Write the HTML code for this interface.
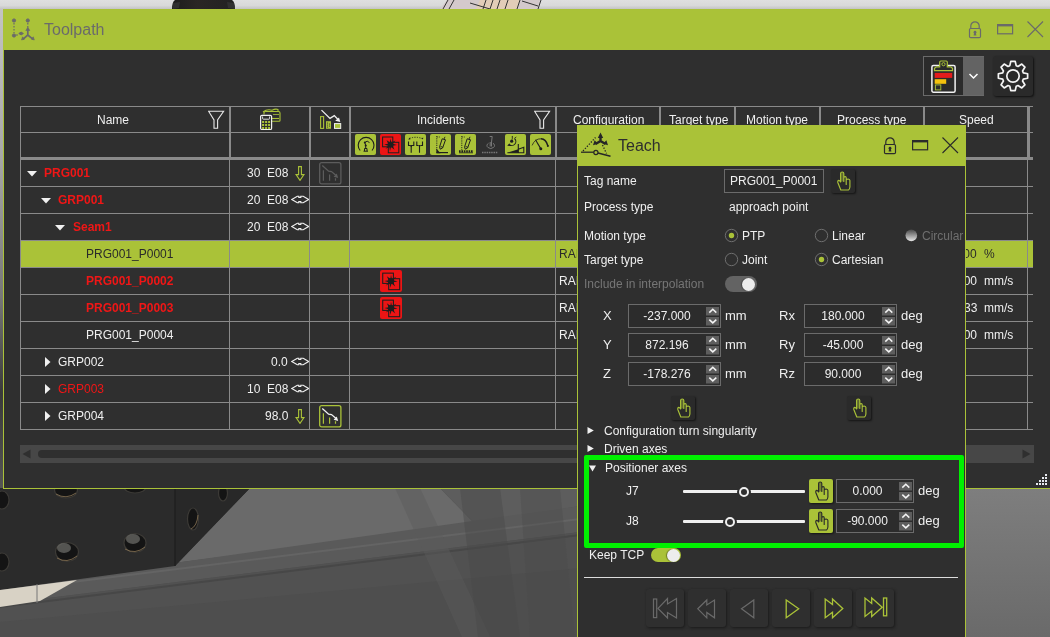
<!DOCTYPE html><html><head><meta charset="utf-8"><style>
*{margin:0;padding:0;box-sizing:border-box}
html,body{width:1050px;height:637px;overflow:hidden;background:#6e6e6e;font-family:"Liberation Sans",sans-serif;font-size:12px;color:#efefef}
.a{position:absolute}
.t{white-space:nowrap;line-height:14px;will-change:transform}
svg{display:block}
</style></head><body><svg class="a" style="left:0;top:0" width="1050" height="637" viewBox="0 0 1050 637"><defs><linearGradient id="topg" x1="0" y1="0" x2="0" y2="1"><stop offset="0" stop-color="#dfdfdf"/><stop offset="0.55" stop-color="#d9d9d9"/><stop offset="1" stop-color="#bdbdbd"/></linearGradient><linearGradient id="rg2" x1="0" y1="0" x2="0" y2="1"><stop offset="0" stop-color="#7e7e7e"/><stop offset="1" stop-color="#6a6a6a"/></linearGradient><linearGradient id="blk" x1="0" y1="0" x2="1" y2="0"><stop offset="0" stop-color="#1c1c1c"/><stop offset="0.4" stop-color="#2a2624"/><stop offset="1" stop-color="#222"/></linearGradient><linearGradient id="lstrip" x1="0" y1="0" x2="0" y2="1"><stop offset="0" stop-color="#c4c4c4"/><stop offset="0.3" stop-color="#a8a8a8"/><stop offset="0.6" stop-color="#777"/><stop offset="0.8" stop-color="#3a3a3a"/><stop offset="1" stop-color="#555"/></linearGradient></defs><rect x="0" y="0" width="1050" height="10" fill="url(#topg)"/><rect x="0" y="9" width="4" height="480" fill="url(#lstrip)"/><path d="M175 0 H232 Q235 2 235 9 H172 Q172 2 175 0Z" fill="url(#blk)"/><path d="M173 3 L180 2 L179 8 L173 9Z M227 2 L234 3 L235 9 L228 8Z" fill="#3a3a3a" opacity="0.6"/><path d="M447 0 H541 L538 9 H440 Z" fill="#d4c9cc"/><path d="M480 0 H520 L517 9 H476 Z" fill="#e2cdb8"/><g stroke="#333" stroke-width="1" fill="none"><path d="M448 0 L443 9 M454 0 L449 9 M470 3 L490 9 M486 0 L483 9 M493 0 L490 9 M500 0 L497 9 M508 0 L505 9 M520 0 L517 9 M522 1 L538 6 M541 0 L538 9"/></g><rect x="0" y="488" width="580" height="149" fill="#4e4e4e"/><path d="M250 488 L440 488 L475 524 L174 563 Z" fill="#6a6a6a"/><path d="M440 488 L580 488 L580 506 L475 524Z" fill="#5d5d5d"/><path d="M174 563 L580 506 L580 532 L0 604 L0 588Z" fill="#5a5a5a"/><path d="M0 604 L580 532 L580 568 L0 622Z" fill="#515151"/><path d="M0 590 L580 518 L580 520 L0 592Z" fill="#646464"/><path d="M0 606 L580 534 L580 536 L0 608Z" fill="#474747"/><path d="M395 488 L420 488 L490 637 L462 637Z" fill="#5a5a5a" opacity="0.45"/><path d="M460 488 L500 488 L520 637 L478 637Z" fill="#4a4a4a" opacity="0.45"/><path d="M520 488 L560 488 L575 637 L530 637Z" fill="#4a4a4a" opacity="0.35"/><path d="M0 488 L250 488 L175 566 L0 590 Z" fill="#2b2b2b"/><path d="M175 488 L250 488 L175 566 Z" fill="#282828"/><path d="M175 488 V566" stroke="#1a1a1a" stroke-width="1"/><g fill="#141414" stroke="#3c3a36" stroke-width="1.2"><ellipse cx="67" cy="552" rx="11.5" ry="9.5"/><ellipse cx="135" cy="543" rx="11" ry="9.5"/><ellipse cx="2" cy="562" rx="7" ry="9"/><ellipse cx="2" cy="500" rx="7" ry="9"/><ellipse cx="66" cy="490" rx="11.5" ry="8"/><ellipse cx="135" cy="487" rx="11" ry="6"/><ellipse cx="193" cy="519" rx="5.5" ry="11"/><ellipse cx="223" cy="493" rx="4.5" ry="8"/></g><g fill="#6a6a66" opacity="0.75"><ellipse cx="64" cy="548" rx="7" ry="5"/><ellipse cx="133" cy="539" rx="7" ry="5"/></g><g fill="none" stroke="#8a7556" stroke-width="1" opacity="0.8"><path d="M57 558 Q67 564 77 556"/><path d="M125 549 Q135 555 145 547"/><path d="M56 494 Q66 500 76 493"/><path d="M191 529 Q197 526 198 515"/></g><path d="M0 590 L77 580 L40 601 L0 607 Z" fill="#d8d2c5"/><path d="M37 584 V603" stroke="#777" stroke-width="1"/><rect x="966" y="488" width="84" height="149" fill="url(#rg2)"/></svg>
<div class="a " style="left:3px;top:9px;width:1060px;height:480px;background:#2f2f2f;border:1px solid #aac238"></div>
<div class="a " style="left:3px;top:9px;width:1060px;height:41px;background:#aac238"></div>
<svg class="a" style="left:10px;top:16px" width="30" height="28" viewBox="0 0 30 28"><g fill="#6a6a6a" stroke="#6a6a6a"><circle cx="4" cy="4.5" r="1.6"/><circle cx="17.8" cy="4.5" r="1.6"/><circle cx="4" cy="19.5" r="1.6"/><path d="M8.8 17.5 l2.3 -1.4 l2.3 1.4 l-2.3 1.4z"/><path d="M4 7v10" stroke-width="1.2" stroke-dasharray="1.5 1.5"/><path d="M17.8 7v6" stroke-width="1.2" stroke-dasharray="1.5 1.5"/><path d="M6 19h2" stroke-width="1.2"/><path d="M17.8 13v6 M17.8 19 l-5 4.3 M17.8 19 l5.3 4.3" stroke-width="1.7"/><path d="M15.8 14.5 l2 -3.2 l2 3.2z M11.5 24 l1 -3.2 l2.2 2.2z M24.3 24 l-1 -3.2 l-2.2 2.2z" stroke-width="0.6"/></g></svg>
<div class="a t " style="left:44px;top:21px;font-size:16px;line-height:18px;color:#6b6b6b">Toolpath</div>
<svg class="a" style="left:968px;top:21px" width="14" height="18" viewBox="0 0 14 18"><path d="M2.8 7.5V5a4.2 4.2 0 0 1 8.4 0V7.5" fill="none" stroke="#6a6a6a" stroke-width="1.2"/><rect x="1.5" y="7.5" width="11" height="9.2" rx="1.2" fill="none" stroke="#6a6a6a" stroke-width="1.2"/><circle cx="7" cy="11.2" r="1.4" fill="#6a6a6a"/><path d="M6.2 11.5 L5.6 14.5 H8.4 L7.8 11.5Z" fill="#6a6a6a"/></svg>
<svg class="a" style="left:997px;top:24px" width="17" height="11" viewBox="0 0 17 11"><rect x="0.6" y="0.6" width="15" height="9.2" fill="none" stroke="#6a6a6a" stroke-width="1.2"/><rect x="0.6" y="0.6" width="15" height="1.8" fill="#6a6a6a"/></svg>
<svg class="a" style="left:1027px;top:21px" width="17" height="17" viewBox="0 0 17 17"><path d="M0.5 0.5L16 16M16 0.5L0.5 16" stroke="#6a6a6a" stroke-width="1.1"/></svg>
<div class="a " style="left:923px;top:56px;width:61px;height:40px;background:#2b2b2b;border:1px solid #6a6a6a"></div>
<div class="a " style="left:963px;top:57px;width:21px;height:38px;background:#636363"></div>
<svg class="a" style="left:968px;top:72px" width="11" height="8" viewBox="0 0 11 8"><path d="M1.5 2 L5.5 6 L9.5 2" fill="none" stroke="#fff" stroke-width="1.5"/></svg>
<svg class="a" style="left:931px;top:60px" width="26" height="33" viewBox="0 0 26 33"><rect x="0.9" y="5.6" width="23.2" height="26.6" rx="1.5" fill="none" stroke="#f2f2f2" stroke-width="1.5"/><path d="M3.5 10.6 H21.5 V8.3 L19.5 6.8 H16.3 V2.2 Q16.3 1 15.1 1 H9.9 Q8.7 1 8.7 2.2 V6.8 H5.5 L3.5 8.3 Z" fill="#2b2b2b" stroke="#aac238" stroke-width="1.2"/><circle cx="12.5" cy="4.2" r="1.6" fill="none" stroke="#aac238" stroke-width="1"/><rect x="3.7" y="12.9" width="17.5" height="5" fill="#e31b1b"/><rect x="3.7" y="19.2" width="11.5" height="4.6" fill="#f4c20d"/><rect x="4.4" y="24.9" width="5.4" height="5" fill="none" stroke="#aac238" stroke-width="0.9"/></svg>
<div class="a " style="left:993px;top:56px;width:40px;height:40px;background:#2a2a2a;border-radius:3px;box-shadow:1px 1px 2px #111"></div>
<svg class="a" style="left:993px;top:56px" width="40" height="40" viewBox="0 0 40 40"><path d="M30.32 16.81 L34.63 17.79 L34.63 22.21 L30.32 23.19 L29.55 25.04 L31.91 28.78 L28.78 31.91 L25.04 29.55 L23.19 30.32 L22.21 34.63 L17.79 34.63 L16.81 30.32 L14.96 29.55 L11.22 31.91 L8.09 28.78 L10.45 25.04 L9.68 23.19 L5.37 22.21 L5.37 17.79 L9.68 16.81 L10.45 14.96 L8.09 11.22 L11.22 8.09 L14.96 10.45 L16.81 9.68 L17.79 5.37 L22.21 5.37 L23.19 9.68 L25.04 10.45 L28.78 8.09 L31.91 11.22 L29.55 14.96Z" fill="none" stroke="#f4f4f4" stroke-width="1.7" stroke-linejoin="round"/><circle cx="20" cy="20" r="6.2" fill="none" stroke="#f4f4f4" stroke-width="1.7"/></svg>
<div class="a " style="left:20px;top:241px;width:1013px;height:26px;background:#aac238"></div>
<div class="a " style="left:20px;top:106px;width:1013px;height:1px;background:#8a8a8a"></div>
<div class="a " style="left:20px;top:132px;width:1013px;height:1px;background:#8a8a8a"></div>
<div class="a " style="left:20px;top:157px;width:1013px;height:3px;background:#8a8a8a"></div>
<div class="a " style="left:20px;top:186px;width:1013px;height:1px;background:#8a8a8a"></div>
<div class="a " style="left:20px;top:213px;width:1013px;height:1px;background:#8a8a8a"></div>
<div class="a " style="left:20px;top:240px;width:1013px;height:1px;background:#8a8a8a"></div>
<div class="a " style="left:20px;top:267px;width:1013px;height:1px;background:#8a8a8a"></div>
<div class="a " style="left:20px;top:294px;width:1013px;height:1px;background:#8a8a8a"></div>
<div class="a " style="left:20px;top:321px;width:1013px;height:1px;background:#8a8a8a"></div>
<div class="a " style="left:20px;top:348px;width:1013px;height:1px;background:#8a8a8a"></div>
<div class="a " style="left:20px;top:375px;width:1013px;height:1px;background:#8a8a8a"></div>
<div class="a " style="left:20px;top:402px;width:1013px;height:1px;background:#8a8a8a"></div>
<div class="a " style="left:20px;top:429px;width:1013px;height:1px;background:#8a8a8a"></div>
<div class="a " style="left:20px;top:106px;width:1px;height:324px;background:#8a8a8a"></div>
<div class="a " style="left:229px;top:106px;width:2px;height:52px;background:#8a8a8a"></div>
<div class="a " style="left:229px;top:158px;width:1px;height:272px;background:#8a8a8a"></div>
<div class="a " style="left:309px;top:106px;width:2px;height:52px;background:#8a8a8a"></div>
<div class="a " style="left:309px;top:158px;width:1px;height:272px;background:#8a8a8a"></div>
<div class="a " style="left:349px;top:106px;width:2px;height:52px;background:#8a8a8a"></div>
<div class="a " style="left:349px;top:158px;width:1px;height:272px;background:#8a8a8a"></div>
<div class="a " style="left:555px;top:106px;width:2px;height:52px;background:#8a8a8a"></div>
<div class="a " style="left:555px;top:158px;width:1px;height:272px;background:#8a8a8a"></div>
<div class="a " style="left:659px;top:106px;width:2px;height:52px;background:#8a8a8a"></div>
<div class="a " style="left:659px;top:158px;width:1px;height:272px;background:#8a8a8a"></div>
<div class="a " style="left:734px;top:106px;width:2px;height:52px;background:#8a8a8a"></div>
<div class="a " style="left:734px;top:158px;width:1px;height:272px;background:#8a8a8a"></div>
<div class="a " style="left:819px;top:106px;width:2px;height:52px;background:#8a8a8a"></div>
<div class="a " style="left:819px;top:158px;width:1px;height:272px;background:#8a8a8a"></div>
<div class="a " style="left:923px;top:106px;width:2px;height:52px;background:#8a8a8a"></div>
<div class="a " style="left:923px;top:158px;width:1px;height:272px;background:#8a8a8a"></div>
<div class="a " style="left:1027px;top:106px;width:3px;height:52px;background:#8a8a8a"></div>
<div class="a " style="left:1027px;top:158px;width:1px;height:272px;background:#8a8a8a"></div>
<div class="a t " style="left:97px;top:113px;">Name</div>
<div class="a t " style="left:417px;top:113px;">Incidents</div>
<div class="a t " style="left:573px;top:113px;">Configuration</div>
<div class="a t " style="left:669px;top:113px;">Target type</div>
<div class="a t " style="left:746px;top:113px;">Motion type</div>
<div class="a t " style="left:837px;top:113px;">Process type</div>
<div class="a t " style="left:959px;top:113px;">Speed</div>
<svg class="a" style="left:208px;top:110px" width="17" height="20" viewBox="0 0 17 20"><path d="M0.6 1.2 H15.6 L9.6 10 V18.3 H6 V10 Z" fill="none" stroke="#e8e8e8" stroke-width="1.1"/></svg>
<svg class="a" style="left:534px;top:110px" width="17" height="20" viewBox="0 0 17 20"><path d="M0.6 1.2 H15.6 L9.6 10 V18.3 H6 V10 Z" fill="none" stroke="#e8e8e8" stroke-width="1.1"/></svg>
<svg class="a" style="left:256px;top:106px" width="28" height="26" viewBox="0 0 28 26"><g fill="none" stroke="#aac238" stroke-width="1.1"><path d="M8 8.5 V6.5 Q8 5.5 9.5 5.5 H22.5 Q24 5.5 24 7 V14.5 Q24 15.2 23.2 15.2 H15.5"/><path d="M7 6 Q11 2.8 16 4.2 Q19.5 2.5 22 3.5 V5.5"/><path d="M15.5 12.5 H23"/><path d="M17 8.5 H23" stroke-width="0.8"/></g><rect x="4.6" y="9.3" width="11" height="14.2" rx="1.3" fill="#2f2f2f" stroke="#f0f0f0" stroke-width="1.2"/><path d="M6.6 10.5 V12.5 Q6.6 13.2 7.3 13.2 H12.9 Q13.6 13.2 13.6 12.5 V10.5" fill="none" stroke="#f0f0f0" stroke-width="0.9"/><g fill="#aac238"><rect x="6.1" y="15" width="2" height="2"/><rect x="6.1" y="18" width="2" height="2"/><rect x="6.1" y="21" width="2" height="2"/><rect x="9.1" y="15" width="2" height="2"/><rect x="9.1" y="18" width="2" height="2"/><rect x="9.1" y="21" width="2" height="2"/><rect x="12.1" y="15" width="2" height="2"/><rect x="12.1" y="18" width="2" height="2"/><rect x="12.1" y="21" width="2" height="2"/></g></svg>
<svg class="a" style="left:318px;top:108px" width="26" height="23" viewBox="0 0 26 23"><path d="M3.5 2.1 L12 10.4 L16.3 7.6 L20.5 12" fill="none" stroke="#f0f0f0" stroke-width="1.3"/><path d="M22.3 14 L17.2 12.8 L21 9.5 Z" fill="#f0f0f0"/><rect x="2.6" y="8.6" width="3" height="11.8" fill="none" stroke="#aac238" stroke-width="1.1"/><rect x="8" y="13.2" width="5" height="7.6" fill="#aac238"/><g fill="#2f2f2f"><circle cx="9.5" cy="15" r="0.6"/><circle cx="9.5" cy="17" r="0.6"/><circle cx="9.5" cy="19" r="0.6"/><circle cx="11.5" cy="16" r="0.6"/><circle cx="11.5" cy="18" r="0.6"/></g><rect x="16.5" y="15.6" width="6.2" height="4.8" fill="#aac238" stroke="#f0f0f0" stroke-width="1"/></svg>
<svg class="a" style="left:355px;top:134px" width="21" height="21" viewBox="0 0 21 21"><rect x="0" y="0" width="21" height="21" rx="2" fill="#aac238"/><path d="M5.2 16.5 A7.9 7.9 0 1 1 17 16.5" fill="none" stroke="#1e1e1e" stroke-width="1.1"/><path d="M8.5 17.2 H13 M9.5 17 V14.5 H12 V17 M10.7 14.5 V11 M10.7 11.5 L9.8 8.5 L12.2 7.2 L14.5 8.6" fill="none" stroke="#1e1e1e" stroke-width="1"/><circle cx="10.7" cy="11.5" r="1" fill="#1e1e1e"/><circle cx="9.8" cy="8.6" r="1" fill="#1e1e1e"/></svg>
<svg class="a" style="left:380px;top:134px" width="21" height="21" viewBox="0 0 21 21"><rect x="0" y="0" width="21" height="21" rx="2" fill="#ec1515"/><rect x="2.6" y="3" width="10.2" height="9.8" fill="none" stroke="#1e1e1e" stroke-width="1"/><rect x="8.3" y="8.3" width="10.5" height="10.5" fill="none" stroke="#1e1e1e" stroke-width="1"/><path d="M10.5 4.5 L11.4 8.6 L15.5 6.5 L12.8 9.8 L16.8 11 L12.7 11.8 L14.5 15.8 L11 13 L10 17 L9.3 13 L5.5 14.8 L8.2 11.7 L4.2 10.6 L8.3 9.7 L6.5 6 L9.9 8.4Z" fill="#1e1e1e"/></svg>
<svg class="a" style="left:405px;top:134px" width="21" height="21" viewBox="0 0 21 21"><rect x="0" y="0" width="21" height="21" rx="2" fill="#aac238"/><path d="M4.5 4.5 Q10.5 2 17 4.5" fill="none" stroke="#1e1e1e" stroke-width="0.9" stroke-dasharray="1.2 1.3"/><path d="M3.3 5.5 L4.5 3.6 L5.4 5.4Z M17.7 5.6 L16.2 4 L18.4 3.8Z" fill="#1e1e1e"/><path d="M3.5 7.5 V11.5 H5.5 M8.8 7.5 V11.5 H7 M6.2 11.5 V18.8 M11.8 7.5 V11.5 H13.5 M17.5 7.5 V11.5 H15.5 M14.5 11.5 V18.8" fill="none" stroke="#1e1e1e" stroke-width="1.1"/><path d="M5.2 11 Q6.2 15.5 7.3 11 M13.5 11 Q14.5 15.5 15.6 11" fill="#1e1e1e"/></svg>
<svg class="a" style="left:430px;top:134px" width="21" height="21" viewBox="0 0 21 21"><rect x="0" y="0" width="21" height="21" rx="2" fill="#aac238"/><path d="M6.8 2 V16" stroke="#1e1e1e" stroke-width="0.9" stroke-dasharray="1.2 1"/><path d="M6.8 3 H10" stroke="#1e1e1e" stroke-width="0.8" stroke-dasharray="1 1"/><path d="M6.5 18.6 H18" stroke="#1e1e1e" stroke-width="1.2"/><path d="M6.3 14.5 V19.2 H10.5Z" fill="#1e1e1e"/><path d="M12.2 4.8 L15.5 5.8 L12.6 14 L10.2 15.2 L9.6 12.8Z" fill="none" stroke="#1e1e1e" stroke-width="1"/><path d="M14 5 L15 2.8 M10.6 12.5 L12.8 13.2" stroke="#1e1e1e" stroke-width="0.9"/></svg>
<svg class="a" style="left:455px;top:134px" width="21" height="21" viewBox="0 0 21 21"><rect x="0" y="0" width="21" height="21" rx="2" fill="#aac238"/><path d="M6.8 2 V16" stroke="#1e1e1e" stroke-width="0.9" stroke-dasharray="1.2 1"/><path d="M6.8 3 H10" stroke="#1e1e1e" stroke-width="0.8" stroke-dasharray="1 1"/><path d="M4 17.4 H18" stroke="#1e1e1e" stroke-width="2.2" stroke-dasharray="1.6 0.8"/><path d="M4 18.8 H18" stroke="#1e1e1e" stroke-width="0.8"/><path d="M12.2 4.8 L15.5 5.8 L12.6 14 L10.2 15.2 L9.6 12.8Z" fill="none" stroke="#1e1e1e" stroke-width="1"/><path d="M14 5 L15 2.8 M10.6 12.5 L12.8 13.2" stroke="#1e1e1e" stroke-width="0.9"/></svg>
<svg class="a" style="left:480px;top:134px" width="21" height="21" viewBox="0 0 21 21"><g fill="none" stroke="#777" stroke-width="1"><path d="M9.7 2.5 H12.2 L11.5 8 V12.5 M10.2 8 V12.5"/><path d="M8.5 9.3 a3.8 2.8 0 1 0 4.5 0"/><path d="M2 18.5 H18" stroke-width="1.5" stroke-dasharray="1.5 0.8"/></g></svg>
<svg class="a" style="left:505px;top:134px" width="21" height="21" viewBox="0 0 21 21"><rect x="0" y="0" width="21" height="21" rx="2" fill="#aac238"/><path d="M2.4 18.8 L13.3 15.2 V18.8Z" fill="#1e1e1e"/><path d="M13.3 10 V18.8 M13.3 15.2 L18.8 13.3 V18.8 H2.4" fill="none" stroke="#1e1e1e" stroke-width="1.1"/><path d="M9.5 4.5 A3.4 3.4 0 1 1 4 10.5" fill="none" stroke="#1e1e1e" stroke-width="1.1"/><circle cx="6.7" cy="7.2" r="1.6" fill="#1e1e1e"/><path d="M2.2 11.8 L4.5 9.2 L5 12Z M6.5 3 L7.3 1.8 L8.2 3.2Z" fill="#1e1e1e"/><path d="M7.3 3 V5.5 M9.5 4.2 L11.3 3" stroke="#1e1e1e" stroke-width="0.8"/></svg>
<svg class="a" style="left:530px;top:134px" width="21" height="21" viewBox="0 0 21 21"><rect x="0" y="0" width="21" height="21" rx="2" fill="#aac238"/><path d="M2.1 11.4 Q5 4.5 11 4.8" fill="none" stroke="#1e1e1e" stroke-width="0.8"/><path d="M11 4.8 Q16 5 17.9 11.9" fill="none" stroke="#1e1e1e" stroke-width="1.6"/><path d="M5.5 5.7 L10.7 14.6" stroke="#1e1e1e" stroke-width="1.1"/><circle cx="10.8" cy="14.8" r="1.5" fill="#1e1e1e"/><circle cx="17.9" cy="12" r="1" fill="#1e1e1e"/></svg>
<svg class="a" style="left:27px;top:171px" width="10" height="6" viewBox="0 0 10 6"><path d="M0 0H10L5 5.5Z" fill="#f0f0f0"/></svg>
<div class="a t " style="left:44px;top:166px;color:#f01616;font-weight:bold;">PRG001</div>
<svg class="a" style="left:41px;top:198px" width="10" height="6" viewBox="0 0 10 6"><path d="M0 0H10L5 5.5Z" fill="#f0f0f0"/></svg>
<div class="a t " style="left:58px;top:193px;color:#f01616;font-weight:bold;">GRP001</div>
<svg class="a" style="left:55px;top:225px" width="10" height="6" viewBox="0 0 10 6"><path d="M0 0H10L5 5.5Z" fill="#f0f0f0"/></svg>
<div class="a t " style="left:73px;top:220px;color:#f01616;font-weight:bold;">Seam1</div>
<div class="a t " style="left:86px;top:247px;color:#2a2a2a;">PRG001_P0001</div>
<div class="a t " style="left:86px;top:274px;color:#f01616;font-weight:bold;">PRG001_P0002</div>
<div class="a t " style="left:86px;top:301px;color:#f01616;font-weight:bold;">PRG001_P0003</div>
<div class="a t " style="left:86px;top:328px;color:#efefef;">PRG001_P0004</div>
<svg class="a" style="left:45px;top:357px" width="6" height="10" viewBox="0 0 6 10"><path d="M0 0V10L5.5 5Z" fill="#f0f0f0"/></svg>
<div class="a t " style="left:58px;top:355px;color:#efefef;">GRP002</div>
<svg class="a" style="left:45px;top:384px" width="6" height="10" viewBox="0 0 6 10"><path d="M0 0V10L5.5 5Z" fill="#f0f0f0"/></svg>
<div class="a t " style="left:58px;top:382px;color:#f01616;">GRP003</div>
<svg class="a" style="left:45px;top:411px" width="6" height="10" viewBox="0 0 6 10"><path d="M0 0V10L5.5 5Z" fill="#f0f0f0"/></svg>
<div class="a t " style="left:58px;top:409px;color:#efefef;">GRP004</div>
<div class="a t" style="right:762px;top:166px;color:#efefef">30&nbsp; E08</div>
<div class="a t" style="right:762px;top:193px;color:#efefef">20&nbsp; E08</div>
<div class="a t" style="right:762px;top:220px;color:#efefef">20&nbsp; E08</div>
<div class="a t" style="right:762px;top:355px;color:#efefef">0.0</div>
<div class="a t" style="right:762px;top:382px;color:#efefef">10&nbsp; E08</div>
<div class="a t" style="right:762px;top:409px;color:#efefef">98.0</div>
<svg class="a" style="left:295px;top:166px" width="10" height="15" viewBox="0 0 10 15"><path d="M3.6 0.6H6.4V8.6H9L5 14.4L1 8.6H3.6Z" fill="none" stroke="#aac238" stroke-width="1.1"/></svg>
<svg class="a" style="left:291px;top:195px" width="18" height="10" viewBox="0 0 18 10"><path d="M0.8 4.5 L6.3 1.2 H7.8 V2.4 H9.8 V1.2 H12.2 L17.6 4.5 L12.2 7.8 H9.8 V6.6 H7.8 V7.8 H6.3 Z" fill="none" stroke="#f0f0f0" stroke-width="1.1" stroke-linejoin="miter"/><path d="M5 4.5 H13.5" stroke="#2f2f2f" stroke-width="1"/></svg>
<svg class="a" style="left:291px;top:222px" width="18" height="10" viewBox="0 0 18 10"><path d="M0.8 4.5 L6.3 1.2 H7.8 V2.4 H9.8 V1.2 H12.2 L17.6 4.5 L12.2 7.8 H9.8 V6.6 H7.8 V7.8 H6.3 Z" fill="none" stroke="#f0f0f0" stroke-width="1.1" stroke-linejoin="miter"/><path d="M5 4.5 H13.5" stroke="#2f2f2f" stroke-width="1"/></svg>
<svg class="a" style="left:291px;top:357px" width="18" height="10" viewBox="0 0 18 10"><path d="M0.8 4.5 L6.3 1.2 H7.8 V2.4 H9.8 V1.2 H12.2 L17.6 4.5 L12.2 7.8 H9.8 V6.6 H7.8 V7.8 H6.3 Z" fill="none" stroke="#f0f0f0" stroke-width="1.1" stroke-linejoin="miter"/><path d="M5 4.5 H13.5" stroke="#2f2f2f" stroke-width="1"/></svg>
<svg class="a" style="left:291px;top:384px" width="18" height="10" viewBox="0 0 18 10"><path d="M0.8 4.5 L6.3 1.2 H7.8 V2.4 H9.8 V1.2 H12.2 L17.6 4.5 L12.2 7.8 H9.8 V6.6 H7.8 V7.8 H6.3 Z" fill="none" stroke="#f0f0f0" stroke-width="1.1" stroke-linejoin="miter"/><path d="M5 4.5 H13.5" stroke="#2f2f2f" stroke-width="1"/></svg>
<svg class="a" style="left:295px;top:409px" width="10" height="15" viewBox="0 0 10 15"><path d="M3.6 0.6H6.4V8.6H9L5 14.4L1 8.6H3.6Z" fill="none" stroke="#aac238" stroke-width="1.1"/></svg>
<svg class="a" style="left:319px;top:162px" width="23" height="23" viewBox="0 0 23 23"><rect x="0.7" y="0.7" width="21.2" height="21.2" rx="2" fill="none" stroke="#5c5c5c" stroke-width="1.3"/><path d="M3.3 3.5 L9.6 9.2 L12.5 9.6 L16.8 13.2" fill="none" stroke="#5c5c5c" stroke-width="1.3"/><path d="M19.2 16 L14.6 14.8 L17.8 11.6Z" fill="#5c5c5c"/><path d="M4.4 8.2V18.8M10.6 12.5V18.8M16.5 16.2V18.8" stroke="#5c5c5c" stroke-width="1.2"/></svg>
<svg class="a" style="left:319px;top:405px" width="23" height="23" viewBox="0 0 23 23"><rect x="0.7" y="0.7" width="21.2" height="21.2" rx="2" fill="none" stroke="#aac238" stroke-width="1.3"/><path d="M3.3 3.5 L9.6 9.2 L12.5 9.6 L16.8 13.2" fill="none" stroke="#f2f2f2" stroke-width="1.3"/><path d="M19.2 16 L14.6 14.8 L17.8 11.6Z" fill="#f2f2f2"/><path d="M4.4 8.2V18.8M10.6 12.5V18.8M16.5 16.2V18.8" stroke="#aac238" stroke-width="1.2"/></svg>
<svg class="a" style="left:380px;top:270px" width="22" height="22" viewBox="0 0 21 21"><rect x="0" y="0" width="21" height="21" rx="2" fill="#ec1515"/><rect x="2.6" y="3" width="10.2" height="9.8" fill="none" stroke="#1e1e1e" stroke-width="1"/><rect x="8.3" y="8.3" width="10.5" height="10.5" fill="none" stroke="#1e1e1e" stroke-width="1"/><path d="M10.5 4.5 L11.4 8.6 L15.5 6.5 L12.8 9.8 L16.8 11 L12.7 11.8 L14.5 15.8 L11 13 L10 17 L9.3 13 L5.5 14.8 L8.2 11.7 L4.2 10.6 L8.3 9.7 L6.5 6 L9.9 8.4Z" fill="#1e1e1e"/></svg>
<svg class="a" style="left:380px;top:297px" width="22" height="22" viewBox="0 0 21 21"><rect x="0" y="0" width="21" height="21" rx="2" fill="#ec1515"/><rect x="2.6" y="3" width="10.2" height="9.8" fill="none" stroke="#1e1e1e" stroke-width="1"/><rect x="8.3" y="8.3" width="10.5" height="10.5" fill="none" stroke="#1e1e1e" stroke-width="1"/><path d="M10.5 4.5 L11.4 8.6 L15.5 6.5 L12.8 9.8 L16.8 11 L12.7 11.8 L14.5 15.8 L11 13 L10 17 L9.3 13 L5.5 14.8 L8.2 11.7 L4.2 10.6 L8.3 9.7 L6.5 6 L9.9 8.4Z" fill="#1e1e1e"/></svg>
<div class="a t " style="left:559px;top:247px;color:#2a2a2a;">RAIL</div>
<div class="a t " style="left:559px;top:274px;color:#efefef;">RAIL</div>
<div class="a t " style="left:559px;top:301px;color:#efefef;">RAIL</div>
<div class="a t " style="left:559px;top:328px;color:#efefef;">RAIL</div>
<div class="a t" style="right:73px;top:247px;color:#2a2a2a">100.00</div>
<div class="a t " style="left:984px;top:247px;color:#2a2a2a;">%</div>
<div class="a t" style="right:73px;top:274px;color:#efefef">50.00</div>
<div class="a t " style="left:984px;top:274px;color:#efefef;">mm/s</div>
<div class="a t" style="right:73px;top:301px;color:#efefef">8.33</div>
<div class="a t " style="left:984px;top:301px;color:#efefef;">mm/s</div>
<div class="a t" style="right:73px;top:328px;color:#efefef">50.00</div>
<div class="a t " style="left:984px;top:328px;color:#efefef;">mm/s</div>
<div class="a " style="left:20px;top:445px;width:1014px;height:18px;background:#474747"></div>
<svg class="a" style="left:22px;top:449px" width="9" height="10" viewBox="0 0 9 10"><path d="M0.5 5L8.5 0.5V9.5Z" fill="#2f2f2f"/></svg>
<svg class="a" style="left:1022px;top:449px" width="9" height="10" viewBox="0 0 9 10"><path d="M8.5 5L0.5 0.5V9.5Z" fill="#2f2f2f"/></svg>
<div class="a " style="left:38px;top:450px;width:870px;height:8px;background:#2f2f2f;border-radius:4px"></div>
<svg class="a" style="left:1036px;top:474px" width="12" height="12" viewBox="0 0 12 12"><g fill="#e8eaf0"><rect x="9" y="0" width="2" height="2"/><rect x="6" y="3" width="2" height="2"/><rect x="9" y="3" width="2" height="2"/><rect x="3" y="6" width="2" height="2"/><rect x="6" y="6" width="2" height="2"/><rect x="9" y="6" width="2" height="2"/><rect x="0" y="9" width="2" height="2"/><rect x="3" y="9" width="2" height="2"/><rect x="6" y="9" width="2" height="2"/><rect x="9" y="9" width="2" height="2"/></g></svg>
<div class="a " style="left:577px;top:125px;width:389px;height:520px;background:#2f2f2f;border:1px solid #aac238"></div>
<div class="a " style="left:577px;top:125px;width:389px;height:41px;background:#aac238"></div>
<svg class="a" style="left:578px;top:126px" width="40" height="38" viewBox="0 0 40 38"><g fill="none" stroke="#262626"><path d="M5 25 L17.5 11.5" stroke-width="1.3" stroke-dasharray="1.3 1.6"/><path d="M24.5 19 L28.5 27.5" stroke-width="1.3" stroke-dasharray="1.3 1.6"/><path d="M3 26.2 H15.8" stroke-width="1.3"/><circle cx="17.9" cy="26.5" r="2.1" stroke-width="1.2"/><path d="M20 27 L32.5 30.3" stroke-width="1.4"/><path d="M22.5 10 V15 L17.5 18 M22.5 15 L27.5 18" stroke-width="2.4"/></g><path d="M19.8 12 L22.5 6.5 L25.2 12Z M15 19.3 L16.6 14.3 L20 17.8Z M30 19.3 L28.4 14.3 L25 17.8Z" fill="#262626"/></svg>
<div class="a t " style="left:618px;top:137px;font-size:16px;line-height:18px;color:#2e2e2e">Teach</div>
<svg class="a" style="left:883px;top:137px" width="14" height="18" viewBox="0 0 14 18"><path d="M2.8 7.5V5a4.2 4.2 0 0 1 8.4 0V7.5" fill="none" stroke="#2b2b2b" stroke-width="1.2"/><rect x="1.5" y="7.5" width="11" height="9.2" rx="1.2" fill="none" stroke="#2b2b2b" stroke-width="1.2"/><circle cx="7" cy="11.2" r="1.4" fill="#2b2b2b"/><path d="M6.2 11.5 L5.6 14.5 H8.4 L7.8 11.5Z" fill="#2b2b2b"/></svg>
<svg class="a" style="left:912px;top:140px" width="17" height="11" viewBox="0 0 17 11"><rect x="0.6" y="0.6" width="15" height="9.2" fill="none" stroke="#2b2b2b" stroke-width="1.2"/><rect x="0.6" y="0.6" width="15" height="1.8" fill="#2b2b2b"/></svg>
<svg class="a" style="left:942px;top:137px" width="17" height="17" viewBox="0 0 17 17"><path d="M0.5 0.5L16 16M16 0.5L0.5 16" stroke="#2b2b2b" stroke-width="1.1"/></svg>
<div class="a t " style="left:584px;top:174px;color:#efefef;font-size:12px">Tag name</div>
<div class="a " style="left:724px;top:169px;width:100px;height:24px;border:1px solid #6b6b6b;background:#2c2c2c"></div>
<div class="a t " style="left:730px;top:174px;font-size:12px">PRG001_P0001</div>
<div class="a " style="left:831px;top:169px;width:24px;height:24px;background:#2a2a2a;border-radius:2px;box-shadow:1px 1px 2px #151515"></div>
<svg class="a" style="left:831px;top:169px" width="24" height="24" viewBox="0 0 24 24"><path d="M9.6 13 V4.6 Q9.6 3 11.2 3 Q12.8 3 12.8 4.6 V12" fill="#aac238" fill-opacity="0.4" stroke="none"/><path d="M9.8 21 L6.8 13.5 Q6.3 11.8 7.6 11.4 Q8.5 11.3 9.6 13 V4.6 Q9.6 3 11.2 3 Q12.8 3 12.8 4.6 V8.7 Q13.1 7.6 14.2 7.6 Q15.2 7.6 15.2 8.7 V10.8 Q15.9 10 17.2 10 Q18.9 10.2 18.9 11.5 V18 Q18.6 20.5 17.5 21 Z M12.8 8.7 V12.5 M15.2 10.8 V15.5" fill="none" stroke="#aac238" stroke-width="1.15" stroke-linejoin="round" stroke-linecap="round"/></svg>
<div class="a t " style="left:584px;top:200px;color:#efefef;font-size:12px">Process type</div>
<div class="a t " style="left:729px;top:200px;">approach point</div>
<div class="a t " style="left:584px;top:229px;color:#efefef;font-size:12px">Motion type</div>
<div class="a t " style="left:584px;top:253px;color:#efefef;font-size:12px">Target type</div>
<div class="a t " style="left:584px;top:277px;color:#767676;font-size:12px">Include in interpolation</div>
<svg class="a" style="left:723px;top:227px" width="17" height="17" viewBox="0 0 17 17"><circle cx="8.5" cy="8.5" r="6.2" fill="none" stroke="#6e6e6e" stroke-width="1"/><circle cx="8.5" cy="8.5" r="2.7" fill="#aac238"/></svg>
<div class="a t " style="left:742px;top:229px;">PTP</div>
<svg class="a" style="left:813px;top:227px" width="17" height="17" viewBox="0 0 17 17"><circle cx="8.5" cy="8.5" r="6.2" fill="none" stroke="#6e6e6e" stroke-width="1"/></svg>
<div class="a t " style="left:832px;top:229px;">Linear</div>
<svg class="a" style="left:903px;top:227px" width="17" height="17" viewBox="0 0 17 17"><defs><linearGradient id="rg" x1="0" y1="0" x2="0" y2="1"><stop offset="0" stop-color="#4a4a4a"/><stop offset="1" stop-color="#e6e6e6"/></linearGradient></defs><circle cx="8.3" cy="8.4" r="5.8" fill="url(#rg)"/></svg>
<div class="a t " style="left:922px;top:229px;color:#6f6f6f">Circular</div>
<svg class="a" style="left:723px;top:251px" width="17" height="17" viewBox="0 0 17 17"><circle cx="8.5" cy="8.5" r="6.2" fill="none" stroke="#6e6e6e" stroke-width="1"/></svg>
<div class="a t " style="left:742px;top:253px;">Joint</div>
<svg class="a" style="left:813px;top:251px" width="17" height="17" viewBox="0 0 17 17"><circle cx="8.5" cy="8.5" r="6.2" fill="none" stroke="#6e6e6e" stroke-width="1"/><circle cx="8.5" cy="8.5" r="2.7" fill="#aac238"/></svg>
<div class="a t " style="left:832px;top:253px;">Cartesian</div>
<div class="a " style="left:725px;top:276px;width:32px;height:16px;background:#636363;border-radius:8px"></div>
<div class="a " style="left:742px;top:277.5px;width:13px;height:13px;background:#ececec;border-radius:50%;box-shadow:-1px 0 1px #444"></div>
<div class="a t " style="left:603px;top:309px;font-size:13px">X</div>
<div class="a " style="left:628px;top:304px;width:93px;height:24px;border:1px solid #6b6b6b;background:#2c2c2c"></div>
<div class="a t" style="left:628px;top:309px;width:78px;text-align:center">-237.000</div>
<svg class="a" style="left:706px;top:307px" width="13" height="19" viewBox="0 0 13 19"><rect x="0" y="0" width="13" height="8.5" fill="#5e5e5e"/><rect x="0" y="10" width="13" height="8.5" fill="#5e5e5e"/><path d="M3.3 5.6 L6.8 2.3 L10.3 5.6 M3.3 12.6 L6.8 15.9 L10.3 12.6" fill="none" stroke="#f4f4f4" stroke-width="1.5"/></svg>
<div class="a t " style="left:725px;top:309px;font-size:13px">mm</div>
<div class="a t " style="left:603px;top:338px;font-size:13px">Y</div>
<div class="a " style="left:628px;top:333px;width:93px;height:24px;border:1px solid #6b6b6b;background:#2c2c2c"></div>
<div class="a t" style="left:628px;top:338px;width:78px;text-align:center">872.196</div>
<svg class="a" style="left:706px;top:336px" width="13" height="19" viewBox="0 0 13 19"><rect x="0" y="0" width="13" height="8.5" fill="#5e5e5e"/><rect x="0" y="10" width="13" height="8.5" fill="#5e5e5e"/><path d="M3.3 5.6 L6.8 2.3 L10.3 5.6 M3.3 12.6 L6.8 15.9 L10.3 12.6" fill="none" stroke="#f4f4f4" stroke-width="1.5"/></svg>
<div class="a t " style="left:725px;top:338px;font-size:13px">mm</div>
<div class="a t " style="left:603px;top:367px;font-size:13px">Z</div>
<div class="a " style="left:628px;top:362px;width:93px;height:24px;border:1px solid #6b6b6b;background:#2c2c2c"></div>
<div class="a t" style="left:628px;top:367px;width:78px;text-align:center">-178.276</div>
<svg class="a" style="left:706px;top:365px" width="13" height="19" viewBox="0 0 13 19"><rect x="0" y="0" width="13" height="8.5" fill="#5e5e5e"/><rect x="0" y="10" width="13" height="8.5" fill="#5e5e5e"/><path d="M3.3 5.6 L6.8 2.3 L10.3 5.6 M3.3 12.6 L6.8 15.9 L10.3 12.6" fill="none" stroke="#f4f4f4" stroke-width="1.5"/></svg>
<div class="a t " style="left:725px;top:367px;font-size:13px">mm</div>
<div class="a t " style="left:779px;top:309px;font-size:13px">Rx</div>
<div class="a " style="left:804px;top:304px;width:93px;height:24px;border:1px solid #6b6b6b;background:#2c2c2c"></div>
<div class="a t" style="left:804px;top:309px;width:78px;text-align:center">180.000</div>
<svg class="a" style="left:882px;top:307px" width="13" height="19" viewBox="0 0 13 19"><rect x="0" y="0" width="13" height="8.5" fill="#5e5e5e"/><rect x="0" y="10" width="13" height="8.5" fill="#5e5e5e"/><path d="M3.3 5.6 L6.8 2.3 L10.3 5.6 M3.3 12.6 L6.8 15.9 L10.3 12.6" fill="none" stroke="#f4f4f4" stroke-width="1.5"/></svg>
<div class="a t " style="left:901px;top:309px;font-size:13px">deg</div>
<div class="a t " style="left:779px;top:338px;font-size:13px">Ry</div>
<div class="a " style="left:804px;top:333px;width:93px;height:24px;border:1px solid #6b6b6b;background:#2c2c2c"></div>
<div class="a t" style="left:804px;top:338px;width:78px;text-align:center">-45.000</div>
<svg class="a" style="left:882px;top:336px" width="13" height="19" viewBox="0 0 13 19"><rect x="0" y="0" width="13" height="8.5" fill="#5e5e5e"/><rect x="0" y="10" width="13" height="8.5" fill="#5e5e5e"/><path d="M3.3 5.6 L6.8 2.3 L10.3 5.6 M3.3 12.6 L6.8 15.9 L10.3 12.6" fill="none" stroke="#f4f4f4" stroke-width="1.5"/></svg>
<div class="a t " style="left:901px;top:338px;font-size:13px">deg</div>
<div class="a t " style="left:779px;top:367px;font-size:13px">Rz</div>
<div class="a " style="left:804px;top:362px;width:93px;height:24px;border:1px solid #6b6b6b;background:#2c2c2c"></div>
<div class="a t" style="left:804px;top:367px;width:78px;text-align:center">90.000</div>
<svg class="a" style="left:882px;top:365px" width="13" height="19" viewBox="0 0 13 19"><rect x="0" y="0" width="13" height="8.5" fill="#5e5e5e"/><rect x="0" y="10" width="13" height="8.5" fill="#5e5e5e"/><path d="M3.3 5.6 L6.8 2.3 L10.3 5.6 M3.3 12.6 L6.8 15.9 L10.3 12.6" fill="none" stroke="#f4f4f4" stroke-width="1.5"/></svg>
<div class="a t " style="left:901px;top:367px;font-size:13px">deg</div>
<div class="a " style="left:671px;top:396px;width:24px;height:24px;background:#2a2a2a;border-radius:2px;box-shadow:1px 1px 2px #151515"></div>
<svg class="a" style="left:671px;top:396px" width="24" height="24" viewBox="0 0 24 24"><path d="M9.6 13 V4.6 Q9.6 3 11.2 3 Q12.8 3 12.8 4.6 V12" fill="#aac238" fill-opacity="0.4" stroke="none"/><path d="M9.8 21 L6.8 13.5 Q6.3 11.8 7.6 11.4 Q8.5 11.3 9.6 13 V4.6 Q9.6 3 11.2 3 Q12.8 3 12.8 4.6 V8.7 Q13.1 7.6 14.2 7.6 Q15.2 7.6 15.2 8.7 V10.8 Q15.9 10 17.2 10 Q18.9 10.2 18.9 11.5 V18 Q18.6 20.5 17.5 21 Z M12.8 8.7 V12.5 M15.2 10.8 V15.5" fill="none" stroke="#aac238" stroke-width="1.15" stroke-linejoin="round" stroke-linecap="round"/></svg>
<div class="a " style="left:847px;top:396px;width:24px;height:24px;background:#2a2a2a;border-radius:2px;box-shadow:1px 1px 2px #151515"></div>
<svg class="a" style="left:847px;top:396px" width="24" height="24" viewBox="0 0 24 24"><path d="M9.6 13 V4.6 Q9.6 3 11.2 3 Q12.8 3 12.8 4.6 V12" fill="#aac238" fill-opacity="0.4" stroke="none"/><path d="M9.8 21 L6.8 13.5 Q6.3 11.8 7.6 11.4 Q8.5 11.3 9.6 13 V4.6 Q9.6 3 11.2 3 Q12.8 3 12.8 4.6 V8.7 Q13.1 7.6 14.2 7.6 Q15.2 7.6 15.2 8.7 V10.8 Q15.9 10 17.2 10 Q18.9 10.2 18.9 11.5 V18 Q18.6 20.5 17.5 21 Z M12.8 8.7 V12.5 M15.2 10.8 V15.5" fill="none" stroke="#aac238" stroke-width="1.15" stroke-linejoin="round" stroke-linecap="round"/></svg>
<svg class="a" style="left:587px;top:427px" width="7" height="7" viewBox="0 0 7 7"><path d="M0.5 0V7L6.8 3.5Z" fill="#f0f0f0"/></svg>
<div class="a t " style="left:604px;top:424px;">Configuration turn singularity</div>
<svg class="a" style="left:587px;top:445px" width="7" height="7" viewBox="0 0 7 7"><path d="M0.5 0V7L6.8 3.5Z" fill="#f0f0f0"/></svg>
<div class="a t " style="left:604px;top:442px;">Driven axes</div>
<div class="a " style="left:584px;top:455px;width:380px;height:93px;border:5px solid #00f000;border-radius:2px"></div>
<svg class="a" style="left:589px;top:465px" width="7" height="7" viewBox="0 0 7 7"><path d="M0 0.5H7L3.5 6.5Z" fill="#f0f0f0"/></svg>
<div class="a t " style="left:605px;top:461px;">Positioner axes</div>
<div class="a t " style="left:626px;top:484px;">J7</div>
<div class="a " style="left:683px;top:490px;width:122px;height:3px;background:#f0f0f0;border-radius:1px"></div>
<div class="a " style="left:739px;top:487px;width:10px;height:10px;border:2px solid #f0f0f0;border-radius:50%;background:#2f2f2f;box-shadow:0 0 0 2px #2f2f2f"></div>
<div class="a " style="left:809px;top:479px;width:24px;height:24px;background:#aac238;border-radius:2px;box-shadow:1px 1px 2px #151515"></div>
<svg class="a" style="left:809px;top:479px" width="24" height="24" viewBox="0 0 24 24"><path d="M9.6 13 V4.6 Q9.6 3 11.2 3 Q12.8 3 12.8 4.6 V12" fill="#2b2b2b" fill-opacity="0.4" stroke="none"/><path d="M9.8 21 L6.8 13.5 Q6.3 11.8 7.6 11.4 Q8.5 11.3 9.6 13 V4.6 Q9.6 3 11.2 3 Q12.8 3 12.8 4.6 V8.7 Q13.1 7.6 14.2 7.6 Q15.2 7.6 15.2 8.7 V10.8 Q15.9 10 17.2 10 Q18.9 10.2 18.9 11.5 V18 Q18.6 20.5 17.5 21 Z M12.8 8.7 V12.5 M15.2 10.8 V15.5" fill="none" stroke="#2b2b2b" stroke-width="1.15" stroke-linejoin="round" stroke-linecap="round"/></svg>
<div class="a " style="left:836px;top:479px;width:78px;height:24px;border:1px solid #6b6b6b;background:#2c2c2c"></div>
<div class="a t" style="left:836px;top:484px;width:63px;text-align:center">0.000</div>
<svg class="a" style="left:899px;top:482px" width="13" height="19" viewBox="0 0 13 19"><rect x="0" y="0" width="13" height="8.5" fill="#5e5e5e"/><rect x="0" y="10" width="13" height="8.5" fill="#5e5e5e"/><path d="M3.3 5.6 L6.8 2.3 L10.3 5.6 M3.3 12.6 L6.8 15.9 L10.3 12.6" fill="none" stroke="#f4f4f4" stroke-width="1.5"/></svg>
<div class="a t " style="left:918px;top:484px;font-size:13px">deg</div>
<div class="a t " style="left:626px;top:514px;">J8</div>
<div class="a " style="left:683px;top:520px;width:122px;height:3px;background:#f0f0f0;border-radius:1px"></div>
<div class="a " style="left:725px;top:517px;width:10px;height:10px;border:2px solid #f0f0f0;border-radius:50%;background:#2f2f2f;box-shadow:0 0 0 2px #2f2f2f"></div>
<div class="a " style="left:809px;top:509px;width:24px;height:24px;background:#aac238;border-radius:2px;box-shadow:1px 1px 2px #151515"></div>
<svg class="a" style="left:809px;top:509px" width="24" height="24" viewBox="0 0 24 24"><path d="M9.6 13 V4.6 Q9.6 3 11.2 3 Q12.8 3 12.8 4.6 V12" fill="#2b2b2b" fill-opacity="0.4" stroke="none"/><path d="M9.8 21 L6.8 13.5 Q6.3 11.8 7.6 11.4 Q8.5 11.3 9.6 13 V4.6 Q9.6 3 11.2 3 Q12.8 3 12.8 4.6 V8.7 Q13.1 7.6 14.2 7.6 Q15.2 7.6 15.2 8.7 V10.8 Q15.9 10 17.2 10 Q18.9 10.2 18.9 11.5 V18 Q18.6 20.5 17.5 21 Z M12.8 8.7 V12.5 M15.2 10.8 V15.5" fill="none" stroke="#2b2b2b" stroke-width="1.15" stroke-linejoin="round" stroke-linecap="round"/></svg>
<div class="a " style="left:836px;top:509px;width:78px;height:24px;border:1px solid #6b6b6b;background:#2c2c2c"></div>
<div class="a t" style="left:836px;top:514px;width:63px;text-align:center">-90.000</div>
<svg class="a" style="left:899px;top:512px" width="13" height="19" viewBox="0 0 13 19"><rect x="0" y="0" width="13" height="8.5" fill="#5e5e5e"/><rect x="0" y="10" width="13" height="8.5" fill="#5e5e5e"/><path d="M3.3 5.6 L6.8 2.3 L10.3 5.6 M3.3 12.6 L6.8 15.9 L10.3 12.6" fill="none" stroke="#f4f4f4" stroke-width="1.5"/></svg>
<div class="a t " style="left:918px;top:514px;font-size:13px">deg</div>
<div class="a t " style="left:589px;top:548px;color:#efefef;font-size:12px">Keep TCP</div>
<div class="a " style="left:651px;top:548px;width:30px;height:14px;background:#aac238;border-radius:7px"></div>
<div class="a " style="left:667px;top:548.5px;width:13px;height:13px;background:#ededed;border-radius:50%;box-shadow:-1px 0 1px #6d7a22"></div>
<div class="a " style="left:584px;top:577px;width:374px;height:1px;background:#dcdcdc"></div>
<div class="a " style="left:646px;top:589px;width:38px;height:38px;background:#2f2f2f;border-radius:3px;box-shadow:1px 1px 3px #1a1a1a"></div>
<svg class="a" style="left:646px;top:589px" width="38" height="38" viewBox="0 0 38 38"><g fill="none" stroke="#6a6a6a" stroke-width="1.2"><rect x="7.5" y="10" width="3.2" height="18.6"/><path d="M12 19.4 L21.5 9.6 V15 L30.5 9.6 V29 L21.5 23.6 V29Z"/></g></svg>
<div class="a " style="left:688px;top:589px;width:38px;height:38px;background:#2f2f2f;border-radius:3px;box-shadow:1px 1px 3px #1a1a1a"></div>
<svg class="a" style="left:688px;top:589px" width="38" height="38" viewBox="0 0 38 38"><g fill="none" stroke="#6a6a6a" stroke-width="1.2"><path d="M9.8 19.8 L18.8 11 V16 L26.5 11 V28.8 L18.8 23.5 V28.8Z"/></g></svg>
<div class="a " style="left:730px;top:589px;width:38px;height:38px;background:#2f2f2f;border-radius:3px;box-shadow:1px 1px 3px #1a1a1a"></div>
<svg class="a" style="left:730px;top:589px" width="38" height="38" viewBox="0 0 38 38"><g fill="none" stroke="#6a6a6a" stroke-width="1.2"><path d="M11.5 19.8 L23.8 11 V28.8Z"/></g></svg>
<div class="a " style="left:772px;top:589px;width:38px;height:38px;background:#2f2f2f;border-radius:3px;box-shadow:1px 1px 3px #1a1a1a"></div>
<svg class="a" style="left:772px;top:589px" width="38" height="38" viewBox="0 0 38 38"><g fill="none" stroke="#aac238" stroke-width="1.3"><path d="M26.7 19.8 L14.2 11 V28.8Z"/></g></svg>
<div class="a " style="left:814px;top:589px;width:38px;height:38px;background:#2f2f2f;border-radius:3px;box-shadow:1px 1px 3px #1a1a1a"></div>
<svg class="a" style="left:814px;top:589px" width="38" height="38" viewBox="0 0 38 38"><g fill="none" stroke="#aac238" stroke-width="1.3"><path d="M28.8 19.4 L18.5 10 V15.5 L11.2 10 V28.8 L18.5 23.2 V28.8Z"/></g></svg>
<div class="a " style="left:856px;top:589px;width:38px;height:38px;background:#2f2f2f;border-radius:3px;box-shadow:1px 1px 3px #1a1a1a"></div>
<svg class="a" style="left:856px;top:589px" width="38" height="38" viewBox="0 0 38 38"><g fill="none" stroke="#aac238" stroke-width="1.3"><path d="M26.2 18.2 L15.7 9 V14.5 L9 9 V27.5 L15.7 22 V27.5Z"/><rect x="27.5" y="9" width="3.2" height="17.8"/></g></svg></body></html>
